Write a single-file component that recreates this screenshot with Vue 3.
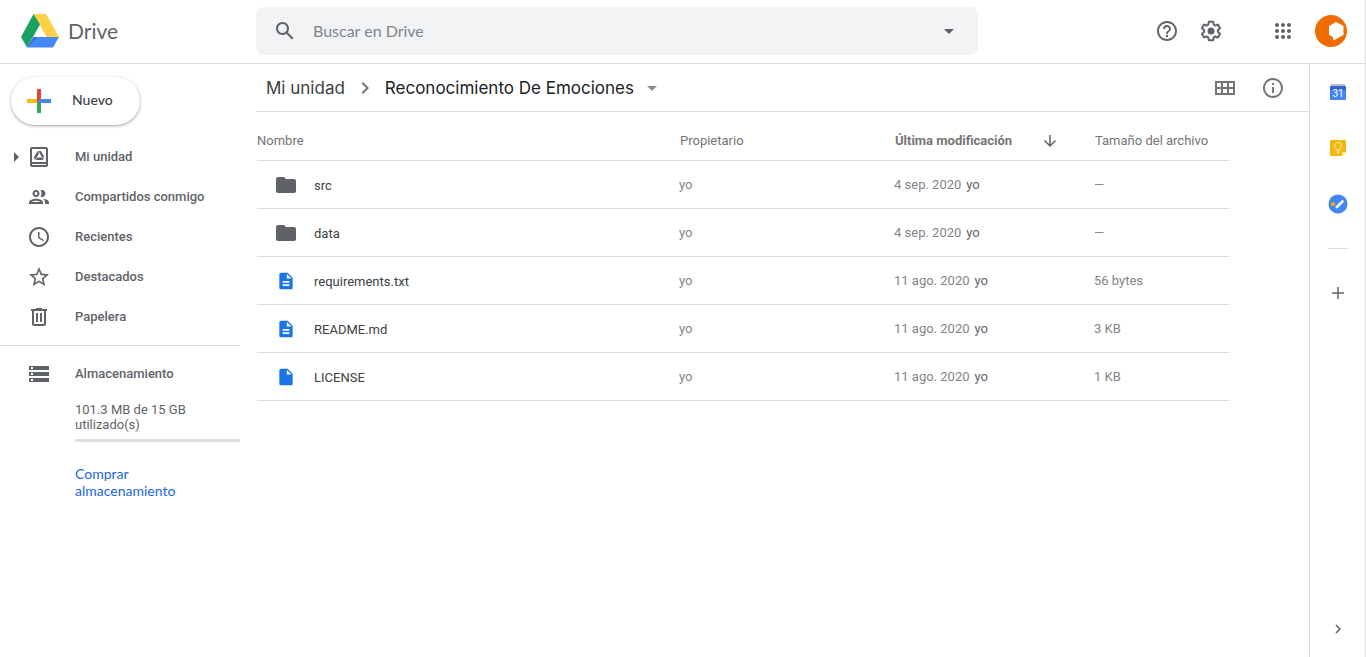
<script setup>
import { ref } from 'vue'

const query = ref('')

const icons = {
  drive: 'M19 2H5c-1.100 0-2 .9-2 2v16c0 1.100.9 2 2 2h14c1.100 0 2-.9 2-2V4c0-1.100-.9-2-2-2zm0 18H5v-1h14v1zm0-3H5V4h14v13zM10.600 6 6.800 12.500 8.200 15l3.800-6.500zM10.300 12.400 8.800 15h7l1.400-2.600zM11.300 6l3.500 6h2.600L13.800 6z',
  people: 'M9 13.750c-2.340 0-7 1.170-7 3.500V19h14v-1.750c0-2.330-4.660-3.500-7-3.500zM4.340 17c.84-.58 2.870-1.250 4.660-1.250s3.820.67 4.660 1.250H4.340zM9 12c1.930 0 3.500-1.570 3.500-3.500S10.930 5 9 5 5.500 6.570 5.500 8.500 7.070 12 9 12zm0-5c.83 0 1.500.67 1.500 1.500S9.830 10 9 10s-1.500-.67-1.500-1.500S8.170 7 9 7zm7.040 6.810c1.160.84 1.960 1.960 1.960 3.440V19h4v-1.750c0-2.020-3.500-3.170-5.960-3.440zM15 12c1.930 0 3.500-1.570 3.500-3.500S16.930 5 15 5c-.54 0-1.040.13-1.500.35.63.89 1 1.980 1 3.150s-.37 2.260-1 3.150c.46.22.96.35 1.500.35z',
  clock: 'M11.990 2C6.470 2 2 6.480 2 12s4.470 10 9.990 10C17.520 22 22 17.520 22 12S17.520 2 11.990 2zM12 20c-4.420 0-8-3.580-8-8s3.580-8 8-8 8 3.580 8 8-3.580 8-8 8zm.5-13H11v6l5.250 3.150.75-1.230-4.500-2.670z',
  star: 'M22 9.240l-7.190-.62L12 2 9.190 8.630 2 9.240l5.460 4.730L5.820 21 12 17.270 18.180 21l-1.630-7.030L22 9.240zM12 15.400l-3.760 2.270 1-4.280-3.320-2.880 4.380-.38L12 6.100l1.710 4.040 4.380.38-3.320 2.880 1 4.280L12 15.400z',
  trash: 'M15 4V3H9v1H4v2h1v13c0 1.100.9 2 2 2h10c1.100 0 2-.9 2-2V6h1V4h-5zm2 15H7V6h10v13zM9 8h2v9H9zm4 0h2v9h-2z',
  storage: 'M2 20h20v-4H2v4zm2-3h2v2H4v-2zM2 4v4h20V4H2zm4 3H4V5h2v2zm-4 7h20v-4H2v4zm2-3h2v2H4v-2z',
  search: 'M20.490 19l-5.730-5.730C15.530 12.200 16 10.910 16 9.500 16 5.910 13.090 3 9.500 3S3 5.910 3 9.500 5.910 16 9.500 16c1.410 0 2.700-.47 3.770-1.240L19 20.490 20.490 19zM5 9.500C5 7.010 7.010 5 9.500 5S14 7.010 14 9.500 11.990 14 9.500 14 5 11.990 5 9.500z',
  caret: 'M7 10l5 5 5-5z',
  chevron: 'M10 6L8.590 7.410 13.170 12l-4.580 4.590L10 18l6-6z',
  help: 'M11 18h2v-2h-2v2zm1-16C6.480 2 2 6.480 2 12s4.480 10 10 10 10-4.480 10-10S17.520 2 12 2zm0 18c-4.410 0-8-3.590-8-8s3.590-8 8-8 8 3.590 8 8-3.590 8-8 8zm0-14c-2.210 0-4 1.790-4 4h2c0-1.100.9-2 2-2s2 .9 2 2c0 2-3 1.750-3 5h2c0-2.250 3-2.500 3-5 0-2.210-1.790-4-4-4z',
  gear: 'M13.850 22.250h-3.700c-.74 0-1.360-.54-1.450-1.270l-.27-1.890c-.27-.14-.53-.29-.79-.46l-1.800.72c-.7.26-1.470-.03-1.810-.65L2.200 15.530c-.35-.66-.2-1.440.36-1.880l1.530-1.190c-.01-.15-.02-.3-.02-.46 0-.15.01-.31.02-.46l-1.520-1.190c-.59-.45-.74-1.260-.37-1.880l1.850-3.190c.34-.62 1.110-.9 1.790-.63l1.810.73c.26-.17.52-.32.78-.46l.27-1.910c.09-.7.71-1.250 1.440-1.250h3.700c.74 0 1.360.54 1.450 1.270l.27 1.890c.27.14.53.29.79.46l1.800-.72c.71-.26 1.480.03 1.820.65l1.840 3.180c.36.66.2 1.440-.36 1.880l-1.520 1.190c.01.15.02.3.02.46s-.01.31-.02.46l1.520 1.190c.56.45.72 1.230.37 1.860l-1.860 3.220c-.34.62-1.110.9-1.800.63l-1.800-.72c-.26.17-.52.32-.78.46l-.27 1.910c-.1.68-.72 1.220-1.460 1.220zm-3.230-2h2.760l.37-2.550.53-.22c.44-.18.88-.44 1.340-.78l.45-.34 2.380.96 1.380-2.400-2.030-1.580.07-.56c.03-.26.06-.51.06-.78s-.03-.53-.06-.78l-.07-.56 2.030-1.580-1.390-2.400-2.390.96-.45-.35c-.42-.32-.87-.58-1.330-.77l-.52-.22-.37-2.550h-2.760l-.37 2.550-.53.21c-.44.19-.88.44-1.340.79l-.45.33-2.380-.95-1.390 2.390 2.030 1.580-.07.56a7 7 0 0 0-.06.79c0 .26.02.53.06.78l.07.56-2.030 1.580 1.380 2.400 2.390-.96.45.35c.43.33.86.58 1.330.77l.53.22.38 2.550zM12 8.500a3.500 3.500 0 1 0 0 7 3.500 3.500 0 0 0 0-7z',
  apps: 'M6 8c1.100 0 2-.9 2-2s-.9-2-2-2-2 .9-2 2 .9 2 2 2zm6 12c1.100 0 2-.9 2-2s-.9-2-2-2-2 .9-2 2 .9 2 2 2zm-6 0c1.100 0 2-.9 2-2s-.9-2-2-2-2 .9-2 2 .9 2 2 2zm0-6c1.100 0 2-.9 2-2s-.9-2-2-2-2 .9-2 2 .9 2 2 2zm6 0c1.100 0 2-.9 2-2s-.9-2-2-2-2 .9-2 2 .9 2 2 2zm4-8c0 1.100.9 2 2 2s2-.9 2-2-.9-2-2-2-2 .9-2 2zm-4 2c1.100 0 2-.9 2-2s-.9-2-2-2-2 .9-2 2 .9 2 2 2zm6 6c1.100 0 2-.9 2-2s-.9-2-2-2-2 .9-2 2 .9 2 2 2zm0 6c1.100 0 2-.9 2-2s-.9-2-2-2-2 .9-2 2 .9 2 2 2z',
  grid: 'M2 5v14h20V5H2zm6 12H4v-4h4v4zm0-6H4V7h4v4zm6 6h-4v-4h4v4zm0-6h-4V7h4v4zm6 6h-4v-4h4v4zm0-6h-4V7h4v4z',
  info: 'M11 17h2v-6h-2v6zm1-15C6.480 2 2 6.480 2 12s4.480 10 10 10 10-4.480 10-10S17.520 2 12 2zm0 18c-4.410 0-8-3.590-8-8s3.590-8 8-8 8 3.590 8 8-3.590 8-8 8zM11 9h2V7h-2v2z',
  arrow: 'M20 12l-1.410-1.410L13 16.170V4h-2v12.170l-5.580-5.590L4 12l8 8 8-8z',
  plus: 'M20 13h-7v7h-2v-7H4v-2h7V4h2v7h7v2z',
  folder: 'M10 4H4c-1.100 0-2 .9-2 2v12c0 1.100.9 2 2 2h16c1.100 0 2-.9 2-2V8c0-1.100-.9-2-2-2h-8l-2-2z',
  text: 'M14 2H6c-1.100 0-2 .9-2 2v16c0 1.100.9 2 2 2h12c1.100 0 2-.9 2-2V8l-6-6zm2 16H8v-2h8v2zm0-4H8v-2h8v2zm-3-5V3.500L18.500 9H13z',
  file: 'M6 2c-1.100 0-2 .9-2 2v16c0 1.100.9 2 2 2h12c1.100 0 2-.9 2-2V8l-6-6H6zm7 7V3.500L18.500 9H13z',
}

const nav = [
  { label: 'Mi unidad', icon: 'drive', expandable: true },
  { label: 'Compartidos conmigo', icon: 'people' },
  { label: 'Recientes', icon: 'clock' },
  { label: 'Destacados', icon: 'star' },
  { label: 'Papelera', icon: 'trash' },
]

const files = [
  { name: 'src', icon: 'folder', date: '4 sep. 2020', size: '—' },
  { name: 'data', icon: 'folder', date: '4 sep. 2020', size: '—' },
  { name: 'requirements.txt', icon: 'text', date: '11 ago. 2020', size: '56 bytes' },
  { name: 'README.md', icon: 'text', date: '11 ago. 2020', size: '3 KB' },
  { name: 'LICENSE', icon: 'file', date: '11 ago. 2020', size: '1 KB' },
]
</script>

<template>
  <div class="app">
    <header class="header">
      <a class="brand" href="#">
        <svg class="logo" width="40" height="36" viewBox="0 0 40 36" aria-hidden="true">
          <path fill="#ffcf48" d="M13.500 1H26l13 23H26.500z" />
          <path fill="#1aa15f" d="M13.500 1 1 24l6 10.500 13-23z" />
          <path fill="#4587f4" d="M13.500 24H39l-6 10.500H7z" />
          <path fill="#3b6fd6" d="M13.500 24 7 34.500l11-10.500z" />
        </svg>
        <span>Drive</span>
      </a>
      <form class="search" role="search" @submit.prevent>
        <button class="icon-btn" type="submit" aria-label="Buscar">
          <svg class="icon" viewBox="0 0 24 24"><path :d="icons.search" /></svg>
        </button>
        <input v-model="query" type="text" placeholder="Buscar en Drive" aria-label="Buscar en Drive" />
        <button class="icon-btn" type="button" aria-label="Opciones de búsqueda">
          <svg class="icon" viewBox="0 0 24 24"><path :d="icons.caret" /></svg>
        </button>
      </form>
      <div class="tools">
        <button class="icon-btn" aria-label="Ayuda">
          <svg class="icon" viewBox="0 0 24 24"><path :d="icons.help" /></svg>
        </button>
        <button class="icon-btn" aria-label="Configuración">
          <svg class="icon" viewBox="0 0 24 24"><path :d="icons.gear" /></svg>
        </button>
        <button class="icon-btn apps" aria-label="Aplicaciones">
          <svg class="icon" viewBox="0 0 24 24"><path :d="icons.apps" /></svg>
        </button>
        <button class="avatar" aria-label="Cuenta">
          <svg width="32" height="32" viewBox="0 0 32 32">
            <circle cx="16" cy="16" r="16" fill="#ef6c00" />
            <path fill="#fff" d="M14 11l7-4 7.500 4v9l-10 5.500-.8-3.500-3.700-2.300z" />
          </svg>
        </button>
      </div>
    </header>

    <div class="body">
      <aside class="sidebar">
        <button class="new-btn">
          <svg width="24" height="24" viewBox="0 0 24 24" aria-hidden="true">
            <path fill="#fbbc04" d="M0 10h10v4H0z" />
            <path fill="#ea4335" d="M10 0h4v10l-4 4z" />
            <path fill="#34a853" d="M10 14l4-4v14h-4z" />
            <path fill="#4285f4" d="M14 10h10v4H10z" />
          </svg>
          <span>Nuevo</span>
        </button>
        <nav>
          <a v-for="item in nav" :key="item.label" class="nav-item" href="#">
            <svg v-if="item.expandable" class="expander" width="5" height="10" viewBox="0 0 5 10"><path d="M0 0l5 5-5 5z" /></svg>
            <span v-else class="expander"></span>
            <svg class="icon" viewBox="0 0 24 24"><path fill-rule="evenodd" :d="icons[item.icon]" /></svg>
            <span class="nav-label">{{ item.label }}</span>
          </a>
        </nav>
        <section class="storage">
          <a class="nav-item" href="#">
            <span class="expander"></span>
            <svg class="icon" viewBox="0 0 24 24"><path :d="icons.storage" /></svg>
            <span class="nav-label">Almacenamiento</span>
          </a>
          <div class="quota">
            <p>101.3 MB de 15 GB utilizado(s)</p>
            <div class="meter"></div>
            <a href="#">Comprar almacenamiento</a>
          </div>
        </section>
      </aside>

      <main class="main">
        <div class="toolbar">
          <a class="crumb" href="#">Mi unidad</a>
          <svg class="icon crumb-sep" viewBox="0 0 24 24"><path :d="icons.chevron" /></svg>
          <button class="crumb current">
            <span>Reconocimiento De Emociones</span>
            <svg class="icon" viewBox="0 0 24 24"><path :d="icons.caret" /></svg>
          </button>
          <div class="actions">
            <button class="icon-btn" aria-label="Vista de cuadrícula">
              <svg class="icon" viewBox="0 0 24 24"><path :d="icons.grid" /></svg>
            </button>
            <button class="icon-btn" aria-label="Ver detalles">
              <svg class="icon" viewBox="0 0 24 24"><path :d="icons.info" /></svg>
            </button>
          </div>
        </div>
        <div class="list">
          <table>
            <thead>
              <tr>
                <th class="col-name" scope="col">Nombre</th>
                <th class="col-owner" scope="col">Propietario</th>
                <th class="col-date" scope="col" aria-sort="descending">
                  <div class="sorted">
                    <span>Última modificación</span>
                    <svg width="18" height="18" viewBox="0 0 24 24"><path :d="icons.arrow" /></svg>
                  </div>
                </th>
                <th class="col-size" scope="col">Tamaño del archivo</th>
              </tr>
            </thead>
            <tbody>
              <tr v-for="file in files" :key="file.name">
                <td>
                  <div class="file">
                    <svg :class="['file-icon', { doc: file.icon !== 'folder' }]" viewBox="0 0 24 24"><path :d="icons[file.icon]" /></svg>
                    <span class="file-name">{{ file.name }}</span>
                  </div>
                </td>
                <td>yo</td>
                <td>{{ file.date }}<span class="by">yo</span></td>
                <td>{{ file.size }}</td>
              </tr>
            </tbody>
          </table>
        </div>
      </main>

      <aside class="panel" aria-label="Panel lateral">
        <button class="icon-btn" aria-label="Calendar">
          <svg width="16" height="16" viewBox="0 0 16 16">
            <path fill="#bdbdbd" d="M1 0h14v3H1z" />
            <path fill="#3367d6" d="M0 2h16v4H0z" />
            <path fill="#4285f4" d="M0 6h16v9a1 1 0 0 1-1 1H1a1 1 0 0 1-1-1z" />
            <text class="day" x="8" y="13" text-anchor="middle">31</text>
          </svg>
        </button>
        <button class="icon-btn" aria-label="Keep">
          <svg width="16" height="16" viewBox="0 0 16 16">
            <path fill="#f5b50a" d="M1 0h14a1 1 0 0 1 1 1v11l-4 4H1a1 1 0 0 1-1-1V1a1 1 0 0 1 1-1z" />
            <path fill="#fde293" d="M12 12h4l-4 4z" />
            <path fill="none" stroke="#fff5d0" d="M6.500 10V9a3.400 3.400 0 1 1 3 0v1zM6.500 12h3M7 13h2" />
          </svg>
        </button>
        <button class="icon-btn" aria-label="Tasks">
          <svg width="20" height="20" viewBox="0 0 20 20">
            <circle cx="10" cy="10" r="9.500" fill="#4285f4" />
            <circle cx="5" cy="10.200" r="2.100" fill="#f9ab00" />
            <path fill="none" stroke="#fff" stroke-width="2.600" stroke-linecap="round" d="M8.800 13.200L14.500 7.500" />
          </svg>
        </button>
        <hr />
        <button class="icon-btn" aria-label="Obtener complementos">
          <svg width="18" height="18" viewBox="0 0 24 24"><path :d="icons.plus" /></svg>
        </button>
        <button class="icon-btn collapse" aria-label="Ocultar panel lateral">
          <svg width="18" height="18" viewBox="0 0 24 24"><path :d="icons.chevron" /></svg>
        </button>
      </aside>
    </div>
  </div>
</template>

<style>
body {
  margin: 0;
  background: #fff;
}
</style>

<style scoped>
.app {
  box-sizing: border-box;
  display: flex;
  flex-direction: column;
  min-height: 100vh;
  border-right: 1px solid #dadce0;
  color: #5f6368;
  fill: #5f6368;
  font: 13px/16px Roboto, "Liberation Sans", sans-serif;
}
a {
  color: inherit;
  text-decoration: none;
}
button {
  padding: 0;
  border: 0;
  background: none;
  color: inherit;
  fill: inherit;
  font: inherit;
  cursor: pointer;
}
svg {
  display: block;
  flex: none;
}
.icon {
  width: 24px;
  height: 24px;
}
.icon-btn {
  display: flex;
  flex: none;
  align-items: center;
  justify-content: center;
  width: 40px;
  height: 40px;
  border-radius: 50%;
}

.header {
  display: flex;
  align-items: center;
  padding: 7px 18px 8px 0;
  border-bottom: 1px solid #dadce0;
}
.brand {
  box-sizing: border-box;
  display: flex;
  flex: none;
  align-items: center;
  gap: 8px;
  width: 256px;
  padding-left: 20px;
  font: 21px/28px Lato, sans-serif;
}
.search {
  box-sizing: border-box;
  display: flex;
  flex: 1;
  align-items: center;
  max-width: 722px;
  height: 48px;
  padding: 0 9px;
  border-radius: 8px;
  background: #f1f3f4;
}
.search input {
  flex: 1;
  min-width: 0;
  padding: 0 8px;
  border: 0;
  outline: 0;
  background: none;
  color: #3c4043;
  font: 16px/24px Lato, sans-serif;
}
.search input::placeholder {
  color: #80868b;
  opacity: 1;
}
.tools {
  display: flex;
  align-items: center;
  gap: 4px;
  margin-left: auto;
}
.apps {
  margin-left: 28px;
}
.avatar {
  margin-left: 8px;
}

.body {
  display: flex;
  flex: 1;
}
.sidebar {
  flex: none;
  width: 240px;
  margin-right: 16px;
}
.new-btn {
  display: flex;
  align-items: center;
  gap: 21px;
  height: 48px;
  margin: 13px 0 12px 11px;
  padding: 0 27px 0 16px;
  border-radius: 24px;
  box-shadow: 0 1px 2px rgba(60, 64, 67, 0.3), 0 1px 3px 1px rgba(60, 64, 67, 0.15);
  color: #3c4043;
  font: 500 14px/20px Lato, sans-serif;
}
.new-btn span {
  padding-bottom: 2px;
}
.nav-item {
  display: flex;
  align-items: center;
  height: 40px;
  padding-left: 14px;
  font-weight: 500;
}
.expander {
  width: 5px;
  margin-right: 8px;
}
.nav-label {
  margin-left: 24px;
}
.storage {
  margin-top: 8px;
  padding-top: 8px;
  border-top: 1px solid #dadce0;
}
.quota {
  padding: 8px 0 0 75px;
}
.quota p {
  width: 120px;
  margin: 0 0 7px;
  line-height: 15px;
}
.meter {
  height: 3px;
  margin-bottom: 23px;
  background: #e0e0e0;
}
.quota a {
  display: block;
  width: 110px;
  color: #1a66e0;
  font: 14px/17px Lato, sans-serif;
}

.main {
  flex: 1;
  min-width: 0;
}
.toolbar {
  box-sizing: border-box;
  display: flex;
  align-items: center;
  height: 48px;
  padding: 0 16px 0 10px;
  border-bottom: 1px solid #dadce0;
}
.crumb {
  color: #3c4043;
  font: 17px/24px Inter, sans-serif;
}
.crumb-sep {
  margin: 0 8px;
  fill: #757575;
}
.current {
  display: flex;
  align-items: center;
  gap: 6px;
  color: #202124;
  fill: #8a8d91;
}
.actions {
  display: flex;
  gap: 8px;
  margin-left: auto;
  fill: #757575;
}
.list {
  padding: 0 80px 0 1px;
}
table {
  width: 100%;
  border-spacing: 0;
  table-layout: fixed;
  color: #80868b;
}
th,
td {
  height: 47px;
  padding: 0;
  border-bottom: 1px solid #dadce0;
  text-align: left;
}
th {
  height: 38px;
  padding-top: 10px;
  color: #757575;
  font-weight: 400;
}
th + th {
  padding-left: 1px;
}
.col-name {
  width: 422px;
}
.col-owner {
  width: 214px;
}
.col-date {
  width: 199px;
  font-weight: 700;
}
.sorted {
  display: flex;
  align-items: center;
  gap: 29px;
}
.file {
  display: flex;
  align-items: center;
  gap: 16px;
  padding-left: 17px;
  color: #3c4043;
}
.file-icon {
  width: 24px;
  height: 24px;
}
.file-name {
  padding-top: 2px;
}
.file-icon.doc {
  width: 20px;
  height: 20px;
  margin: 0 2px;
  fill: #1a73e8;
}
.by {
  margin-left: 5px;
  color: #5f6368;
}

.panel {
  display: flex;
  flex: none;
  flex-direction: column;
  align-items: center;
  gap: 16px;
  width: 55px;
  padding: 8px 0;
  border-left: 1px solid #dadce0;
}
.panel hr {
  width: 20px;
  margin: 8px 0;
  border: 0;
  border-top: 1px solid #dadce0;
}
.day {
  fill: #fff;
  font: 10px Roboto, sans-serif;
}
.collapse {
  margin-top: auto;
}
</style>
